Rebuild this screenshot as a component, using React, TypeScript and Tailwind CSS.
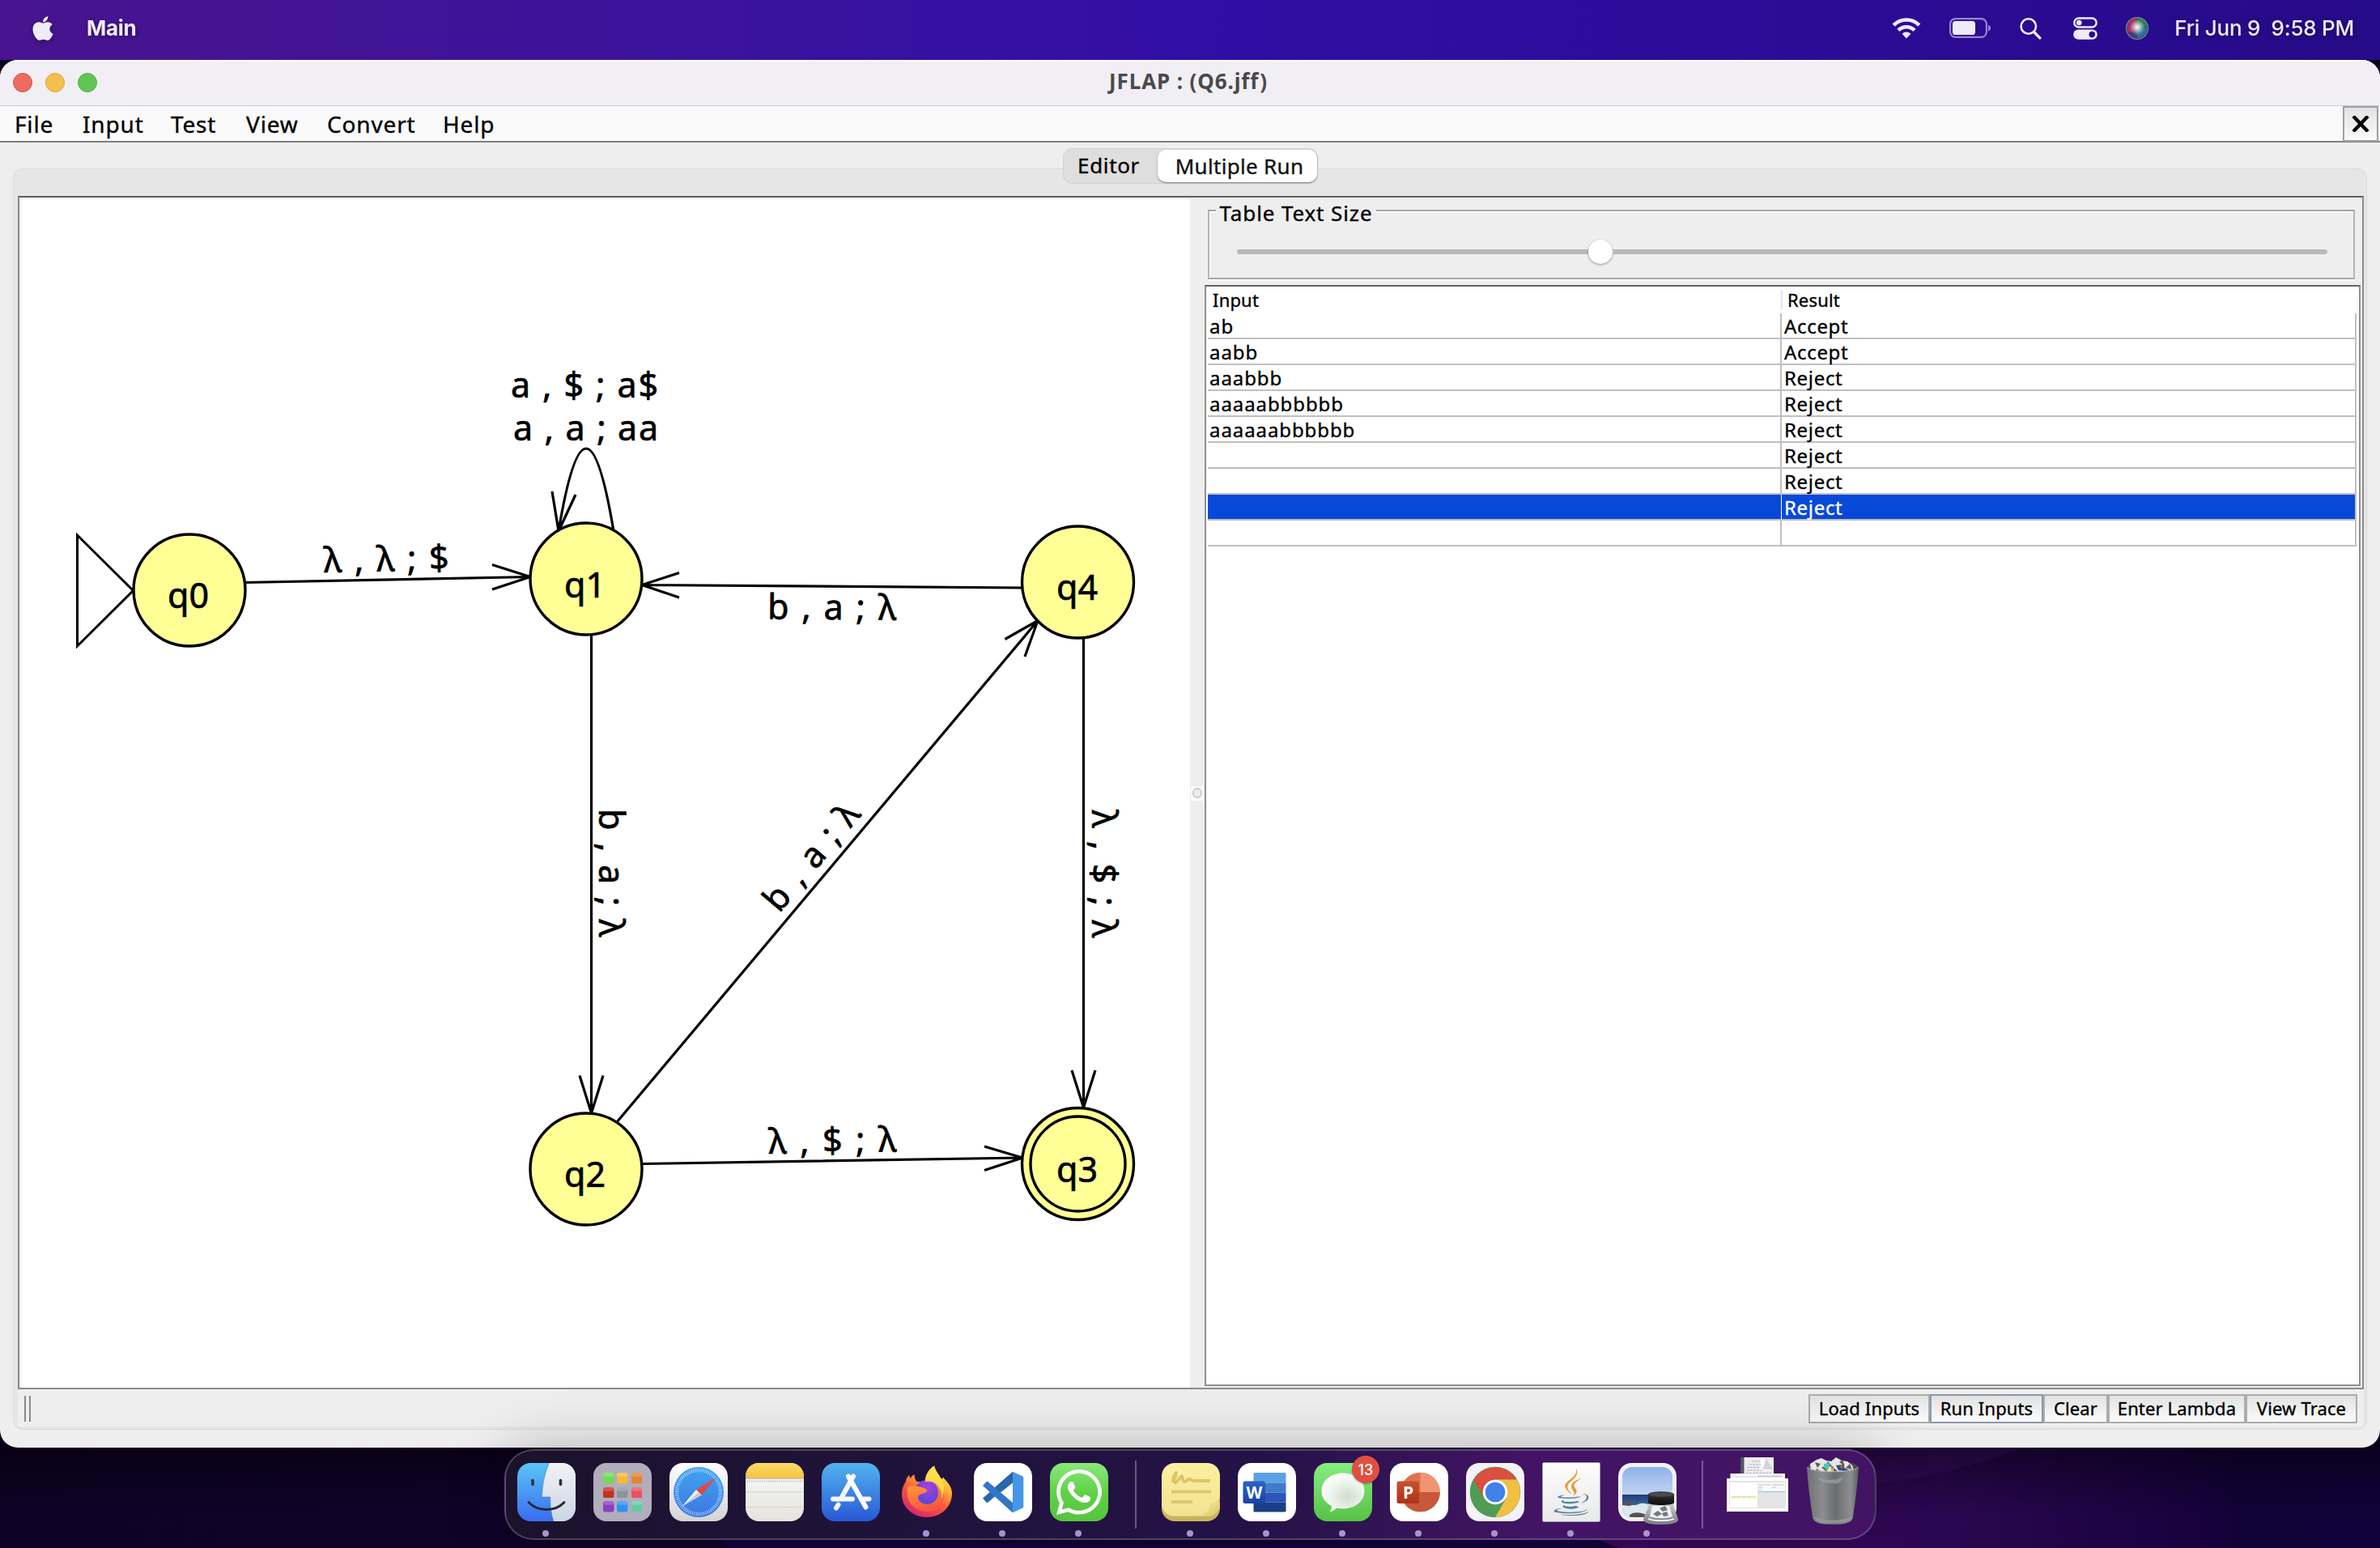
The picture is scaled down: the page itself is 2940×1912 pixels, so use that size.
import React from "react";
import { FaApple, FaJava, FaWhatsapp } from "react-icons/fa";

/* ---------- macOS menu bar ---------- */

function MenuBar() {
  return (
    <header className="flex h-[74px] shrink-0 items-center bg-linear-to-r from-[#48148f] via-[#310ea6] to-[#270a88] pb-[5px] pl-[37px] text-[#eeebf7]">
      <FaApple className="h-[34px] w-[32px] drop-shadow-[0_2px_3px_rgba(0,0,0,0.35)]" />
      <span className="ml-[38px] mt-px font-['Inter'] text-[26px] leading-8 font-bold tracking-[-0.01em] drop-shadow-[0_2px_3px_rgba(0,0,0,0.35)]">Main</span>
      <div className="ml-auto flex items-center pr-[32px]">
        <svg className="h-[28px] w-[36px]" viewBox="0 0 36 28" fill="none">
          <path d="M2.2 10.2a22 22 0 0 1 31.6 0" stroke="#eeebf7" strokeWidth="4.6" />
          <path d="M8 16.4a14 14 0 0 1 20 0" stroke="#eeebf7" strokeWidth="4.4" />
          <path d="M12.6 20.8a7.6 7.6 0 0 1 10.8 0L18 26.6z" fill="#eeebf7" />
        </svg>
        <svg className="ml-[35px] h-[26px] w-[52px]" viewBox="0 0 52 26" fill="none">
          <rect x="1.1" y="1.1" width="44.8" height="22.8" rx="6.5" stroke="#9a83cd" strokeWidth="2.2" />
          <rect x="4" y="4" width="28" height="17" rx="3.6" fill="#eeebf7" />
          <path d="M48 8.800c2.400.8 3 2.400 3 3.900s-.6 3.200-3 4z" fill="#9a83cd" />
        </svg>
        <svg className="ml-[35px] h-[28px] w-[27px]" viewBox="0 0 27 28" fill="none" stroke="#eeebf7">
          <circle cx="10.800" cy="11.500" r="9.200" strokeWidth="2.600" />
          <path d="M17.600 18.500l7.200 7.400" strokeWidth="3.400" strokeLinecap="round" />
        </svg>
        <svg className="ml-[39px] h-[28px] w-[30px]" viewBox="0 0 30 28" fill="none">
          <rect x="1.300" y="1.500" width="27.400" height="11" rx="5.500" stroke="#eeebf7" strokeWidth="2.400" />
          <circle cx="7.300" cy="7" r="3.300" fill="#eeebf7" />
          <rect x="0.200" y="15.500" width="29.600" height="12.300" rx="6.100" fill="#eeebf7" />
          <circle cx="23.300" cy="21.600" r="3.800" fill="#2a0a92" />
        </svg>
        <svg className="ml-[34px] h-[30px] w-[30px]" viewBox="0 0 30 30">
          <defs>
            <radialGradient id="siriGlow" cx="0.5" cy="0.45" r="0.34">
              <stop offset="0" stopColor="#ffffff" />
              <stop offset="0.300" stopColor="#ffffff" stopOpacity="0.700" />
              <stop offset="1" stopColor="#ffffff" stopOpacity="0" />
            </radialGradient>
          </defs>
          <circle cx="15" cy="15" r="14" fill="#2c3552" />
          <path d="M3 12A13 13 0 0 1 15 2c-1 6-2 9 0 12-3 5-6 7-11 6a14 14 0 0 1-1-8z" fill="#a82d61" />
          <path d="M15 2a13 13 0 0 1 12 9c-3 5-8 6-12 3-1-4-1-8 0-12z" fill="#2a7d58" />
          <path d="M27 12c1 8-3 14-11 15-3-5-3-9-1-13 4 3 9 2 12-2z" fill="#28709c" />
          <path d="M4 20c4 1 7-1 11-6-1 6-1 9 1 13-6 0-10-2-12-7z" fill="#4a3a78" />
          <circle cx="15" cy="15" r="14" fill="url(#siriGlow)" />
          <circle cx="15" cy="15" r="13.400" fill="none" stroke="#7c86a3" strokeWidth="1.200" />
        </svg>
        <span className="ml-[31px] mt-px whitespace-pre font-['Inter'] text-[26px] leading-8 font-medium tracking-[-0.009em] drop-shadow-[0_2px_3px_rgba(0,0,0,0.35)]">{"Fri Jun 9  9:58 PM"}</span>
      </div>
    </header>
  );
}

/* ---------- Automaton diagram ---------- */

const STATES = [
  { name: "q0", x: 234, y: 729, tx: 207, ty: 751 },
  { name: "q1", x: 724, y: 715, tx: 697, ty: 737.5 },
  { name: "q2", x: 724, y: 1444, tx: 697, ty: 1466 },
  { name: "q3", x: 1331.5, y: 1437.5, tx: 1305, ty: 1460 },
  { name: "q4", x: 1331.5, y: 719, tx: 1305, ty: 741 },
];

const EDGES = [
  "M302 719.500L655 712.500M608 697.500L655 712.500L608 728",
  "M1263 726L793 722.500M839 707.500L793 722.500L839 738",
  "M730.500 784V1375M716 1328.500L730.500 1375L745 1328.500",
  "M762 1386L1282 766.500M1241.500 789.500L1282 766.500L1266 811",
  "M1338.500 789V1368M1324 1322L1338.500 1368L1353 1322",
  "M793 1437.500L1263 1430M1216 1416L1263 1430L1216 1445.500",
  "M758 656Q724 452 690 656M682 607L690 656L711 611",
];

const LABELS = [
  { t: "a , $ ; a$", x: 631, y: 491, w: 182, a: 0 },
  { t: "a , a ; aa", x: 634, y: 543.5, w: 179, a: 0 },
  { t: "λ , λ ; $", x: 400, y: 707, w: 155, a: -1.1 },
  { t: "b , a ; λ", x: 948, y: 764.5, w: 159, a: 0.4 },
  { t: "λ , $ ; λ", x: 949.5, y: 1425, w: 158, a: -0.9 },
  { t: "b , a ; λ", x: 740, y: 999, w: 158, a: 90 },
  { t: "λ , $ ; λ", x: 1348.5, y: 1000, w: 158, a: 90 },
  { t: "b , a ; λ", x: 962.5, y: 1128.5, w: 159, a: -50 },
];

function Automaton() {
  return (
    <svg className="block h-full w-full" viewBox="26 246 1444 1468" fill="none">
      <path d="M95.500 661V798L164.500 729.500Z" stroke="#000" strokeWidth="3" />
      {EDGES.map((d) => (
        <path key={d} d={d} stroke="#000" strokeWidth="3.200" />
      ))}
      {STATES.map((s) => (
        <g key={s.name}>
          <circle cx={s.x} cy={s.y} r="69" fill="#ffff96" stroke="#000" strokeWidth="3.400" />
          {s.name === "q3" && <circle cx={s.x} cy={s.y} r="58.500" stroke="#000" strokeWidth="3.400" />}
          <text x={s.tx} y={s.ty} textLength="51" fontSize="43" fill="#000" stroke="#000" strokeWidth="0.700" className="font-['Noto_Sans']">
            {s.name}
          </text>
        </g>
      ))}
      {LABELS.map((l, i) => (
        <text
          key={i}
          x={l.x}
          y={l.y}
          textLength={l.w}
          transform={`rotate(${l.a} ${l.x} ${l.y})`}
          fontSize="43"
          fill="#000"
          stroke="#000"
          strokeWidth="0.700"
          className="font-['Noto_Sans']"
        >
          {l.t}
        </text>
      ))}
    </svg>
  );
}

/* ---------- Results ---------- */

const ROWS: { input: string; result: string; selected?: boolean }[] = [
  { input: "ab", result: "Accept" },
  { input: "aabb", result: "Accept" },
  { input: "aaabbb", result: "Reject" },
  { input: "aaaaabbbbbb", result: "Reject" },
  { input: "aaaaaabbbbbb", result: "Reject" },
  { input: "", result: "Reject" },
  { input: "", result: "Reject" },
  { input: "", result: "Reject", selected: true },
  { input: "", result: "" },
];

function TextSizeSlider() {
  return (
    <div className="mt-[15px] mr-[9px] ml-[4px] h-[86px] border-2 border-[#a6a6a6] border-x-[#b4b4b4] shadow-[0_2px_0_#fff,inset_1px_2px_0_#fff]">
      <div className="-mt-[12px] ml-[8px] flex h-[28px] w-[198px] justify-center bg-[#eeeeee] text-[26px] leading-[28px] tracking-[0.034em] whitespace-nowrap">Table Text Size</div>
      <div className="mr-[32px] ml-[34px] mt-[18px] flex h-[32px] items-center">
        <div className="h-[6px] w-[434px] rounded-l-full bg-[#b9b9b9]" />
        <div className="h-[30px] w-[30px] shrink-0 rounded-full bg-white shadow-[0_1px_3px_rgba(0,0,0,0.4)]" />
        <div className="h-[6px] flex-1 rounded-r-full bg-[#b9b9b9]" />
      </div>
    </div>
  );
}

function ResultTable() {
  return (
    <div className="mt-[7px] mr-[2px] mb-[2px] flex-1 border-2 border-[#8f8f8f] border-t-[#666] bg-white pr-[3px] pl-[2px]">
      <div className="flex h-[33px] items-center pb-px text-[22px] tracking-[0.008em]">
        <span className="w-[708px] pl-[6px]">Input</span>
        <span className="flex h-[24px] flex-1 items-center border-l-2 border-[#e4e4e4] pl-[6px]">Result</span>
      </div>
      {ROWS.map((r, i) => (
        <div key={i} className={r.selected ? "flex h-[32px] bg-[#0849d9] text-white" : "flex h-[32px] text-black"}>
          <div className={r.selected ? "w-[709px] border-r border-b-2 border-r-white border-b-[#c0c0c0] pl-[2px]" : "w-[709px] border-r-2 border-b-2 border-[#c0c0c0] pl-[2px]"}>
            <span className="block text-[24px] leading-[32px] tracking-[0.038em]">{r.input}</span>
          </div>
          <div className="flex-1 border-r-2 border-b-2 border-[#c0c0c0] pl-[3px]">
            <span className="block text-[24px] leading-[32px] tracking-[0.028em]">{r.result}</span>
          </div>
        </div>
      ))}
    </div>
  );
}

/* ---------- Window ---------- */

const BUTTONS = [
  { label: "Load Inputs", cls: "w-[150px] border-[#acacac]" },
  { label: "Run Inputs", cls: "w-[140px] border-[#8c98a8]" },
  { label: "Clear", cls: "w-[80px] border-[#acacac]" },
  { label: "Enter Lambda", cls: "w-[170px] border-[#acacac]" },
  { label: "View Trace", cls: "w-[138px] border-[#acacac]" },
];

function JflapWindow() {
  return (
    <section className="flex h-[1714px] shrink-0 flex-col overflow-hidden rounded-[22px] bg-[#eeeeee] font-['Noto_Sans'] text-black [-webkit-text-stroke:0.35px]">
      <div className="flex h-[57px] shrink-0 items-center border-b border-[#cfcdd1] bg-[#f1eff4] shadow-[inset_0_2px_0_#fbfafc]">
        <div className="flex w-[200px] gap-4 pl-4">
          <i className="h-6 w-6 rounded-full border border-[#d95448] bg-[#ed6b5f]" />
          <i className="h-6 w-6 rounded-full border border-[#dba73c] bg-[#f5bf4f]" />
          <i className="h-6 w-6 rounded-full border border-[#4fae40] bg-[#61c554]" />
        </div>
        <div className="flex-1 pb-[3px] text-center text-[26px] font-bold tracking-[0.034em] text-[#4a494c] [-webkit-text-stroke:0px]">JFLAP : (Q6.jff)</div>
        <div className="w-[204px]" />
      </div>

      <nav className="flex h-[45px] shrink-0 items-center border-b-2 border-[#808080] bg-[#fafafa] text-[28px] leading-[42px] tracking-[0.03em]">
        <span className="w-[85px] pl-[18px]">File</span>
        <span className="w-[107px] pl-[17px]">Input</span>
        <span className="w-[95px] pl-[19px]">Test</span>
        <span className="w-[98px] pl-[17px]">View</span>
        <span className="w-[145px] pl-[19px]">Convert</span>
        <span className="pl-[17px]">Help</span>
        <div className="mr-[2px] ml-auto flex h-[44px] w-[44px] items-center justify-center border-2 border-[#a0a0a0] bg-linear-to-b from-[#e2e2e2] to-[#fafafa]">
          <svg className="h-[20px] w-[22px]" viewBox="0 0 22 20" stroke="#000" strokeWidth="4.400">
            <path d="M2 0.500l18 19M20 0.500l-18 19" />
          </svg>
        </div>
      </nav>

      <div className="mx-[16px] mt-[32px] mb-[22px] flex flex-1 flex-col rounded-[12px] border border-[#dadada] bg-[#e6e6e6]">
        <div className="mx-auto -mt-[26px] mb-[15px] flex h-[44px] shrink-0 items-center rounded-[11px] border border-[#d2d2d2] bg-[#dedede] text-[26px] leading-[40px]">
          <span className="w-[116px] pr-1 pb-0.5 text-center tracking-[0.024em]">Editor</span>
          <span className="h-[40px] w-[197px] rounded-[10px] bg-white pl-[6px] text-center tracking-[0.012em] text-[#111] shadow-[0_1px_2px_rgba(0,0,0,0.45)]">Multiple Run</span>
        </div>

        <div className="mr-[3px] ml-[5px] flex flex-1 border-2 border-[#8c8c8c] border-t-[#606060] bg-[#eeeeee]">
          <div className="mt-[2px] ml-[2px] w-[1444px] shrink-0 bg-white">
            <Automaton />
          </div>
          <div className="flex w-[18px] shrink-0 items-center justify-center pt-[2px]">
            <div className="h-[18px] w-[16px] bg-[#fafafa] p-[2px]">
              <div className="h-[13px] w-[12px] rounded-full border-2 border-[#cccccc] bg-[#ececec]" />
            </div>
          </div>
          <div className="flex flex-1 flex-col">
            <TextSizeSlider />
            <ResultTable />
          </div>
        </div>

        <div className="mr-[3px] mb-[3px] ml-[5px] flex h-[46px] shrink-0 items-start bg-[#eeeeee] pt-[6px] pr-[8px] pl-[8px]">
          <div className="mt-[2px] mr-auto h-[32px] w-[8px] border-x-2 border-[#8a8a8a]" />
          {BUTTONS.map((b) => (
            <div key={b.label} className={`flex h-[36px] items-center justify-center border-2 bg-linear-to-b from-[#e2e2e2] to-[#fbfbfb] pb-[2px] text-[22px] tracking-[0.006em] ${b.cls}`}>
              {b.label}
            </div>
          ))}
        </div>
      </div>
    </section>
  );
}

/* ---------- Dock ---------- */

const TILE = "block h-[72px] w-[72px]";

function Grad({ id, from, to }: { id: string; from: string; to: string }) {
  return (
    <linearGradient id={id} x1="0" y1="0" x2="0" y2="1">
      <stop offset="0" stopColor={from} />
      <stop offset="1" stopColor={to} />
    </linearGradient>
  );
}

function Finder() {
  return (
    <svg className={TILE} viewBox="0 0 72 72">
      <defs>
        <Grad id="finderL" from="#5ac4f6" to="#3a6df0" />
        <Grad id="finderR" from="#f2f2f5" to="#ccd6e4" />
        <clipPath id="finderClip"><rect width="72" height="72" rx="16.500" /></clipPath>
      </defs>
      <g clipPath="url(#finderClip)">
        <rect width="72" height="72" fill="url(#finderL)" />
        <path d="M39.500 0C34 12 31 26 30.500 42h10.300c-.3 10 1 21 4 30H72V0z" fill="url(#finderR)" />
      </g>
      <path d="M39.500 0C34 12 31 26 30.500 42h10.300c-.3 10 1 21 4 30" fill="none" stroke="#2f5fae" strokeWidth="0.800" opacity="0.500" />
      <path d="M19 21.500v5M53.500 21.500v5" stroke="#2b3240" strokeWidth="3.600" strokeLinecap="round" />
      <path d="M14 48.500c11 12 33 12 44 0" fill="none" stroke="#222a38" strokeWidth="2.800" strokeLinecap="round" />
    </svg>
  );
}

const LAUNCHPAD = ["#6fdc57", "#f4b93d", "#e58430", "#c4301f", "#8d9498", "#ea4f62", "#8b3fc0", "#2f92f3", "#63c9a3"];

function Launchpad() {
  return (
    <div className="h-[72px] w-[72px] rounded-[16px] bg-[#b1adbb] p-[12px]">
      <div className="grid grid-cols-3 gap-x-[4px] gap-y-[4px]">
        {LAUNCHPAD.map((c) => (
          <svg key={c} className="h-[13.500px] w-[13.500px]" viewBox="0 0 14 14">
            <rect width="14" height="14" rx="3.200" fill={c} />
            <rect width="14" height="5" rx="2.500" fill="#fff" opacity="0.200" />
          </svg>
        ))}
      </div>
    </div>
  );
}

function Safari() {
  return (
    <svg className={TILE} viewBox="0 0 72 72">
      <defs>
        <Grad id="safBg" from="#ffffff" to="#d4d4d4" />
        <Grad id="safDisc" from="#41a3f0" to="#3c77e2" />
      </defs>
      <rect width="72" height="72" rx="16.500" fill="url(#safBg)" />
      <circle cx="36" cy="36" r="31" fill="url(#safDisc)" />
      <circle cx="36" cy="36" r="27" fill="none" stroke="#d8ebfb" strokeWidth="4.400" strokeDasharray="0.700 1.656" />
      <path d="M57.500 18.500L39.500 39.500L33 33z" fill="#e4493c" />
      <path d="M15.500 53.500L33 33l6.500 6.500z" fill="#f1f1f1" />
      <path d="M15.500 53.500L36 36.300l3.500 3.200z" fill="#c5cbd3" />
    </svg>
  );
}

function Notes() {
  return (
    <svg className={TILE} viewBox="0 0 72 72">
      <defs>
        <Grad id="noteTop" from="#fbdc6a" to="#f5c33c" />
        <Grad id="notePaper" from="#fafafa" to="#e4e3dc" />
        <clipPath id="noteClip"><rect width="72" height="72" rx="16.500" /></clipPath>
      </defs>
      <g clipPath="url(#noteClip)">
        <rect width="72" height="72" fill="url(#notePaper)" />
        <rect width="72" height="18.500" fill="url(#noteTop)" />
        <path d="M0 19h72" stroke="#a89b78" strokeWidth="1" />
        <path d="M2 22.500h70" stroke="#b5b5b0" strokeWidth="1.300" strokeDasharray="1.300 1.300" />
        <path d="M0 36h72M0 54.500h72" stroke="#d0cfcb" strokeWidth="1.200" />
      </g>
    </svg>
  );
}

function AppStore() {
  return (
    <svg className={TILE} viewBox="0 0 72 72">
      <defs><Grad id="asBg" from="#52b3ee" to="#2858d6" /></defs>
      <rect width="72" height="72" rx="16.500" fill="url(#asBg)" />
      <g stroke="#f4f7fc" strokeWidth="6" strokeLinecap="round">
        <path d="M14 44.500h24M52 44.500h6.500" />
        <path d="M39 16.500L25 42" />
        <path d="M33 16.500L54.500 54.500" stroke="#fff" />
        <path d="M20.500 51.500L18 55.500" />
      </g>
    </svg>
  );
}

function Firefox() {
  return (
    <svg className={TILE} viewBox="0 0 72 72">
      <defs>
        <linearGradient id="ffBody" x1="0.850" y1="0" x2="0.300" y2="1">
          <stop offset="0" stopColor="#fff36b" />
          <stop offset="0.320" stopColor="#ffb938" />
          <stop offset="0.600" stopColor="#fb5b3c" />
          <stop offset="1" stopColor="#d8256f" />
        </linearGradient>
        <linearGradient id="ffFox" x1="0" y1="0" x2="0.300" y2="1">
          <stop offset="0" stopColor="#ffa436" />
          <stop offset="1" stopColor="#f7553f" />
        </linearGradient>
        <radialGradient id="ffGlobe" cx="0.550" cy="0.300" r="0.800">
          <stop offset="0" stopColor="#a53ee0" />
          <stop offset="1" stopColor="#4a49d6" />
        </radialGradient>
      </defs>
      <path d="M45 3.500c1 5 4 9 8 15 1 1 2 2 3-1 4 5 11 11 11 20C67 55 53 67 36 67S5 55 5 39c0-7 2-12 5-16 .5-4 2-6 4-8l1.500 4c2-3 4.500-4.500 5-5 0 4 1 7 3 9l10 1c0-8 4-16 11.500-20.500z" fill="url(#ffBody)" />
      <circle cx="36" cy="36" r="15" fill="url(#ffGlobe)" />
      <path d="M12 29c4-1 8-1 11 0 5 0 9 1 13 4 1 2-1 4-6 5-4 1-5 3-5 5 1 5 6 8 11 8 9 0 14-7 14-14 0-6-3-11-7-14 8 2 14 9 14 17 0 12-9 20-20 20-14 0-24-9-25-20 0-4-.5-8 0-11z" fill="url(#ffFox)" />
      <path d="M45 3.500c1 5 5 9 8 15 5 9 5 17 1 26 1-9-2-15-7-19-3-2-8-3-13-2 0-8 4-15.500 11-20z" fill="#ffe14f" opacity="0.850" />
    </svg>
  );
}

function VsCode() {
  return (
    <svg className={TILE} viewBox="0 0 72 72">
      <rect width="72" height="72" rx="16.500" fill="#fff" />
      <path d="M11 43.500l4 4.700c.8.900 1.600.9 2.600.2L48 22.500V11.500z" fill="#2a66ab" />
      <path d="M11 28l4-4.500c.8-.9 1.600-.9 2.600-.2L48 49v12.500z" fill="#3277c6" />
      <path d="M48 10.800l12 5.400c1 .5 1.300 1.200 1.300 2v35.600c0 .8-.3 1.500-1.300 2l-12 5.500z" fill="#4596e8" />
      <path d="M48 10.800L26 30l7.500 6L48 24.500z" fill="#2a66ab" />
    </svg>
  );
}

function WhatsApp() {
  return (
    <div className="flex h-[72px] w-[72px] items-center justify-center rounded-[16.500px] bg-linear-to-b from-[#8be87a] via-[#5fd246] to-[#58c33f]">
      <FaWhatsapp className="h-[64px] w-[64px] text-white" />
    </div>
  );
}

function Stickies() {
  return (
    <svg className={TILE} viewBox="0 0 72 72">
      <defs><Grad id="stTop" from="#fcf1a0" to="#f0e391" /></defs>
      <rect y="4" width="72" height="68" rx="16" fill="#c8b35c" />
      <path d="M0 48h72v4c0 8-8 14-16 14H14C6 66 0 60 0 52z" fill="#e3d27a" />
      <path d="M16.500 0h39C66 0 72 7 72 16.500V38c0 14-13 27-27 27H16.500C7 65 0 58 0 48.500v-32C0 7 7 0 16.500 0z" fill="url(#stTop)" />
      <path d="M72 40c0 12-12 25-26 25 10-3 13-7 14-14 6-1 10-5 12-11z" fill="#e9da85" />
      <path d="M14 24c0-6 2-10 4-12 0 4-4 9-2 12 3 2 5-6 9-8 2 2 0 7 3 7s3-3 6-3 4 3 8 2h18" fill="none" stroke="#dcc566" strokeWidth="3.800" strokeLinejoin="round" />
      <path d="M12 35.500h49M12 48h26" stroke="#dcc873" strokeWidth="4.200" />
    </svg>
  );
}

function Word() {
  return (
    <svg className={TILE} viewBox="0 0 72 72">
      <defs><Grad id="wBox" from="#2c62c4" to="#1a43a4" /></defs>
      <rect width="72" height="72" rx="16.500" fill="#fff" />
      <path d="M21 12h37a1.500 1.500 0 0 1 1.500 1.500V24.500h-40V13.500A1.500 1.500 0 0 1 21 12z" fill="#5aa1e6" />
      <path d="M19.500 24.500h40v12h-40z" fill="#4179cd" />
      <path d="M19.500 36.500h40v12h-40z" fill="#2956b8" />
      <path d="M19.500 48.500h40v10.500a1.500 1.500 0 0 1-1.500 1.500H21a1.500 1.500 0 0 1-1.500-1.500z" fill="#1c3e87" />
      <rect x="6.500" y="22.500" width="27.500" height="27.500" rx="2.500" fill="url(#wBox)" />
      <text x="20.300" y="43.500" textAnchor="middle" fontSize="20.500" fill="#fff" className="font-['Open_Sans'] font-bold">W</text>
    </svg>
  );
}

function Messages() {
  return (
    <div className="relative">
      <svg className={TILE} viewBox="0 0 72 72">
        <defs>
          <Grad id="msBg" from="#86ee82" to="#58c145" />
          <radialGradient id="msBubble" cx="0.600" cy="0.600" r="0.650">
            <stop offset="0" stopColor="#cfdccd" />
            <stop offset="0.500" stopColor="#e9f2e8" />
            <stop offset="1" stopColor="#ffffff" />
          </radialGradient>
        </defs>
        <rect width="72" height="72" rx="16.500" fill="url(#msBg)" />
        <path d="M36 12.500c15 0 26.500 9.500 26.500 22S51 56.500 36 56.500c-3 0-5.500-.3-8-.9-2 2.500-5 4.500-8.500 5 1.500-2 2.500-4.500 2.300-7.500C14 49 9.500 42.500 9.500 34.500c0-12.500 11.500-22 26.500-22z" fill="url(#msBubble)" />
      </svg>
      <span className="absolute -top-[9px] -right-[9px] flex h-[34px] w-[34px] items-center justify-center rounded-full bg-[#e14f41] font-['Inter'] text-[18px] font-medium text-white shadow-[0_1px_2px_rgba(0,0,0,0.3)]">13</span>
    </div>
  );
}

function PowerPoint() {
  return (
    <svg className={TILE} viewBox="0 0 72 72">
      <defs><Grad id="pBox" from="#c8502f" to="#ad3317" /></defs>
      <rect width="72" height="72" rx="16.500" fill="#fff" />
      <circle cx="37.500" cy="36" r="24.300" fill="#dc7351" />
      <path d="M37.500 36V11.700A24.300 24.300 0 0 1 61.800 36z" fill="#f09473" />
      <path d="M13.200 36h48.600a24.300 24.300 0 0 1-48.600 0z" fill="#c5593a" />
      <rect x="8.500" y="22.500" width="27.500" height="27.500" rx="2.500" fill="url(#pBox)" />
      <text x="22.500" y="43.500" textAnchor="middle" fontSize="21" fill="#fff" className="font-['Open_Sans'] font-bold">P</text>
    </svg>
  );
}

function Chrome() {
  return (
    <svg className={TILE} viewBox="0 0 72 72">
      <rect width="72" height="72" rx="16.500" fill="#f3f2f6" />
      <circle cx="36" cy="36" r="31.300" fill="#4f9c55" />
      <path d="M36 36L9.300 20.700A31.300 31.300 0 0 1 62.800 20.500H36z" fill="#d94f40" />
      <path d="M36 20.500h26.800A31.300 31.300 0 0 1 36 67.300L49.500 43.800z" fill="#f3bf42" />
      <path d="M9.300 20.700L22.500 43.600 36 36l-4-15.500z" fill="#d94f40" />
      <circle cx="36" cy="36" r="15.300" fill="#fff" />
      <circle cx="36" cy="36" r="12.300" fill="#4280ea" />
    </svg>
  );
}

function Java() {
  return (
    <div className="flex h-[74px] w-[72px] -translate-y-px items-center justify-center rounded-[2px] border border-[#8fa3b8] bg-linear-to-b from-[#fdfdfd] to-[#e9e9e9]">
      <svg className="absolute h-0 w-0">
        <defs>
          <linearGradient id="javaInk" gradientUnits="userSpaceOnUse" x1="0" y1="0" x2="0" y2="512">
            <stop offset="0.570" stopColor="#e8982e" />
            <stop offset="0.570" stopColor="#54809f" />
          </linearGradient>
        </defs>
      </svg>
      <FaJava className="h-[58px] w-[44px] fill-[url(#javaInk)]" />
    </div>
  );
}

function Preview() {
  return (
    <svg className="-mr-[4px] block h-[76px] w-[76px] shrink-0" viewBox="0 0 76 76">
      <defs>
        <Grad id="pvSky" from="#8fb2ea" to="#c3d4f2" />
        <Grad id="pvSea" from="#1f3f7c" to="#5a86b4" />
        <Grad id="pvCap" from="#3a3a3c" to="#0c0c0d" />
        <Grad id="pvGlass" from="#c9cdd0" to="#7b7d80" />
        <clipPath id="pvClip"><rect x="5" y="5" width="62" height="62" rx="12" /></clipPath>
      </defs>
      <rect width="72" height="72" rx="16.500" fill="#f1f1f4" />
      <g clipPath="url(#pvClip)">
        <rect x="5" y="5" width="62" height="35" fill="url(#pvSky)" />
        <rect x="5" y="39" width="62" height="28" fill="url(#pvSea)" />
        <path d="M5 52c8-3 12 2 20-1s12 1 14 0v16H5z" fill="#dbe8f0" />
        <path d="M5 49c6-2 10-1 15 2l-6 2-9-1zM14 64c6-4 14-3 20 0v4H14z" fill="#5b5148" />
      </g>
      <path d="M38 50h30c1 8 5 14 6 20 0 4-8 6-21 6s-22-2-22-6c1-6 6-12 7-20z" fill="url(#pvGlass)" />
      <path d="M42 53h21l4 13c-8 3-20 3-28 0z" fill="#eef0f2" />
      <path d="M51 56l7-3 3 5-6 2zM43 63l6-4 5 4-6 3zM54 62l6-2 2 5-6 1z" fill="#70777f" />
      <path d="M37 69c8 3 24 3 32 0" stroke="#fff" strokeWidth="1.500" fill="none" />
      <path d="M37 39c0-5 32-5 32 0v10c0 4-32 4-32 0z" fill="url(#pvCap)" />
      <ellipse cx="53" cy="39" rx="15" ry="2.800" fill="#4a4a4c" />
    </svg>
  );
}

function Documents() {
  return (
    <svg className="-mt-[8px] block h-[70px] w-[76px]" viewBox="0 0 76 70">
      <rect x="17" y="1" width="41" height="24" fill="#ededf0" />
      <rect x="17" y="1" width="4.500" height="24" fill="#55555a" />
      <path d="M31 6h10M28 10h14M25 13.500h16M25 17h18M24 20.500h32" stroke="#a9abc4" strokeWidth="1.200" strokeDasharray="3 1" />
      <path d="M42 1h6l10 15.500H42z" fill="#fff" />
      <path d="M48 1l10 15.500c-5-1-10-1-15-1 3-3 5-8 5-14.500z" fill="#d4d4d8" />
      <rect x="4.500" y="21" width="67.500" height="12" fill="#fff" />
      <path d="M7 25h30" stroke="#c2d3e0" />
      <path d="M38 24.500h31" stroke="#c9c9c9" strokeWidth="2" />
      <rect x="0" y="27" width="76" height="41" fill="#fff" />
      <rect x="3" y="30" width="70" height="34" fill="#e4e4e4" />
      <rect x="4" y="32" width="34" height="31" fill="#fff" />
      <rect x="38.500" y="32" width="33.500" height="12" fill="#f8f8f8" />
      <path d="M39 43.500h33" stroke="#9dbbe0" />
      <path d="M39 35h15M56 35h14M39 38h5M56 38h5M39 41h5" stroke="#b9b9bd" strokeWidth="0.800" />
      <path d="M6 50h30" stroke="#b5b5b5" strokeWidth="0.800" />
      <g fill="#ecec76">
        <circle cx="7.500" cy="50" r="1.700" /><circle cx="14" cy="50" r="1.700" /><circle cx="21" cy="50" r="1.700" /><circle cx="28.500" cy="50" r="1.700" /><circle cx="35" cy="50" r="1.700" />
      </g>
    </svg>
  );
}

function Trash() {
  return (
    <svg className="-mt-[8px] block h-[86px] w-[66px]" viewBox="0 0 66 86">
      <defs>
        <linearGradient id="canBody" x1="0" y1="0" x2="1" y2="0">
          <stop offset="0" stopColor="#6e7071" />
          <stop offset="0.300" stopColor="#8b8d8e" />
          <stop offset="0.550" stopColor="#6b6d6e" />
          <stop offset="0.850" stopColor="#8c8e8f" />
          <stop offset="1" stopColor="#5a5b5d" />
        </linearGradient>
      </defs>
      <ellipse cx="33" cy="13.500" rx="31.500" ry="8" fill="#4d4e50" />
      <path d="M5 9l8-5 6-2 6 3 6 1 6-5 7 4 7 1 6 5 2 6-8 5H12l-6-4z" fill="#e6e6e3" />
      <path d="M11 7l7 2-4 5zM27 6l6 7-9-2zM45 4l3 8-7-5zM54 9l3 7-8-2zM19 13l8-1-2 7zM13 15l5 3-6 0zM34 14l5 4-5 1zM48 14l6 3-6 1z" fill="#5d5d5d" />
      <path d="M22 9l8-1-2 5-6 1z" fill="#43c6dc" />
      <path d="M22 13l7 0-3 5z" fill="#67c94b" />
      <path d="M37 11l9-1 3 8-9-1z" fill="#28478e" />
      <path d="M41 10l5 2-2 4zM31 12l3 0-2 8z" fill="#c9602b" />
      <path d="M1 13c6 8 58 8 64 0-1 20-4 40-7 62-1 6-8 9-25 9S9 81 8 75C5 53 2 33 1 13z" fill="url(#canBody)" />
      <path d="M1.500 13.500c7 7 56 7 63 0" fill="none" stroke="#a9abac" strokeWidth="1" />
      <path d="M10 74c8 6 38 6 46 0-1 6-8 8.500-23 8.500S11 80 10 74z" fill="#9b9d9e" opacity="0.700" />
      <path d="M14 26c10 4 24 4 32-1-3 7-7 10-14 8-7 0-14-2-18-7z" fill="#a5a7a8" opacity="0.600" />
    </svg>
  );
}

function DockItem({ running, children }: { running?: boolean; children: React.ReactNode }) {
  return (
    <div className="flex flex-col items-center">
      <div className="flex h-[72px]">{children}</div>
      {running && <div className="mt-[11px] mr-[2px] h-[8px] w-[8px] rounded-full bg-[#a893cd]" />}
    </div>
  );
}

function Dock() {
  return (
    <footer className="relative z-10 mt-[2px] ml-[623px] flex h-[112px] w-[1695px] shrink-0 gap-[22px] rounded-[36px] border-2 border-white/20 bg-linear-to-r from-[#1b122c] from-0% via-[#241247] via-55% to-[#421463] to-75% pt-[15px] pl-[14px] shadow-[0_0_70px_rgba(0,0,0,0.25)]">
      <DockItem running><Finder /></DockItem>
      <DockItem><Launchpad /></DockItem>
      <DockItem><Safari /></DockItem>
      <DockItem><Notes /></DockItem>
      <DockItem><AppStore /></DockItem>
      <DockItem running><Firefox /></DockItem>
      <DockItem running><VsCode /></DockItem>
      <DockItem running><WhatsApp /></DockItem>
      <div className="-mt-[3px] mr-[9px] ml-[11px] h-[84px] w-[2px] bg-[#65557f]" />
      <DockItem running><Stickies /></DockItem>
      <DockItem running><Word /></DockItem>
      <DockItem running><Messages /></DockItem>
      <DockItem running><PowerPoint /></DockItem>
      <DockItem running><Chrome /></DockItem>
      <DockItem running><Java /></DockItem>
      <DockItem running><Preview /></DockItem>
      <div className="-mt-[3px] mr-[7px] ml-[9px] h-[84px] w-[2px] bg-[#8050a0]" />
      <DockItem><Documents /></DockItem>
      <DockItem><Trash /></DockItem>
    </footer>
  );
}

export default function App() {
  return (
    <div className="relative flex h-[1912px] w-[2940px] flex-col overflow-hidden bg-[#0b0220]">
      <div className="absolute inset-x-0 bottom-0 h-[150px] bg-linear-to-r from-[#0e0226] via-[#12032f] to-[#12013a]">
        <svg className="h-full w-full" viewBox="0 1762 2940 150" preserveAspectRatio="none">
          <defs>
            <linearGradient id="wallPurple" x1="0" y1="0" x2="1" y2="0">
              <stop offset="0" stopColor="#3d0d63" />
              <stop offset="0.500" stopColor="#330959" />
              <stop offset="1" stopColor="#14013a" />
            </linearGradient>
            <linearGradient id="wallShade" x1="0" y1="0" x2="0" y2="1">
              <stop offset="0" stopColor="#000" stopOpacity="0.600" />
              <stop offset="1" stopColor="#000" stopOpacity="0" />
            </linearGradient>
          </defs>
          <path d="M880 1895C1300 1915 1700 1905 1960 1900L2000 1912H900z" fill="#12043f" />
          <path d="M1780 1762H2760V1912H2000C1940 1890 1840 1830 1780 1762z" fill="url(#wallPurple)" />
          <path d="M2300 1762H2560C2480 1800 2400 1825 2300 1834z" fill="#3f0f6a" opacity="0.500" />
          <rect y="1762" width="2940" height="110" fill="url(#wallShade)" />
        </svg>
      </div>
      <div className="relative flex flex-col">
        <MenuBar />
        <JflapWindow />
        <Dock />
      </div>
    </div>
  );
}
